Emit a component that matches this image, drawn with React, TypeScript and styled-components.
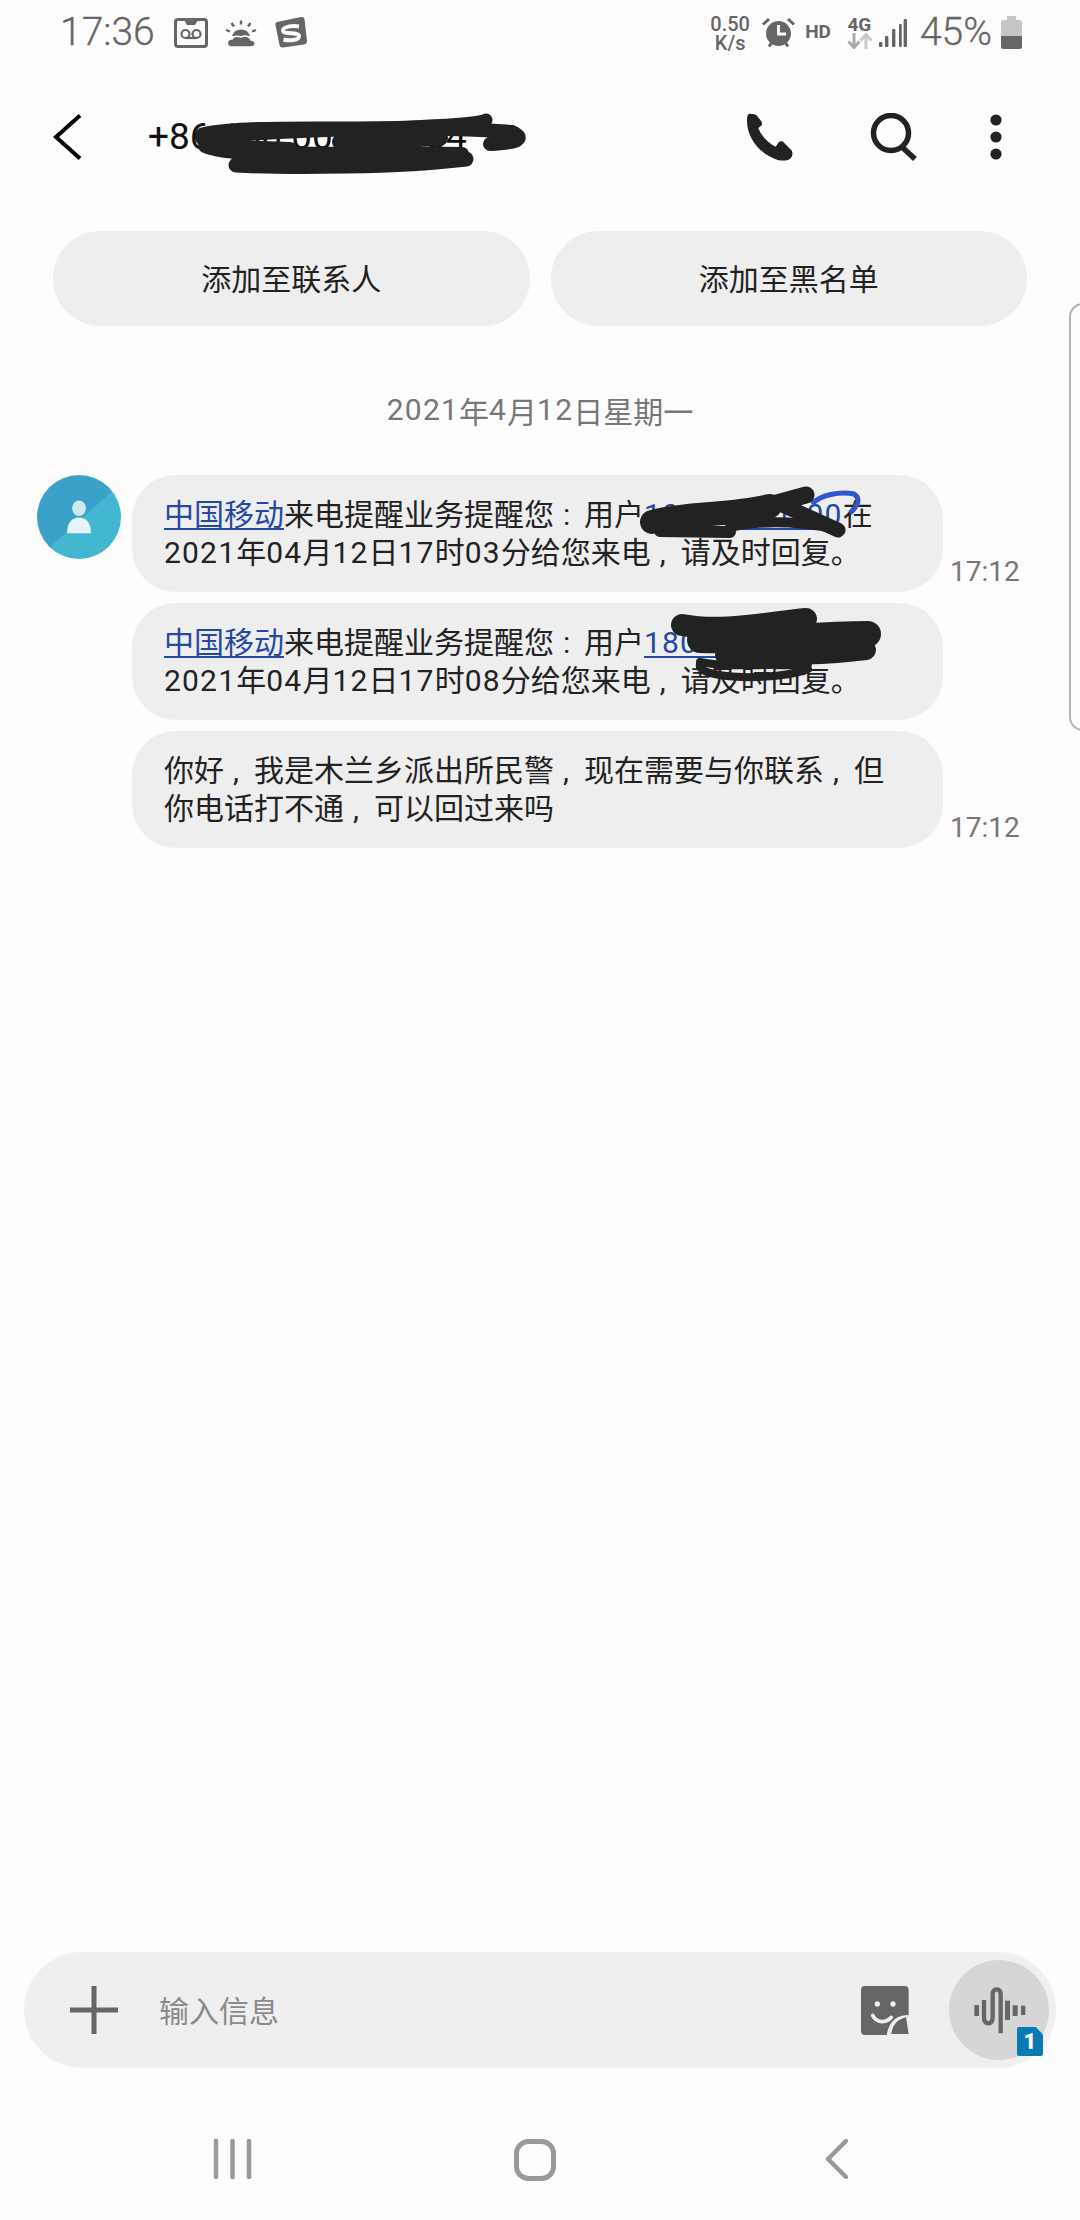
import React from "react";
import styled, { createGlobalStyle } from "styled-components";

const Global = createGlobalStyle`
  html, body { margin: 0; padding: 0; background: #fdfdfd; }
  * { box-sizing: border-box; }
`;

const SANS = `Roboto, "Noto Sans CJK SC", sans-serif`;

const Page = styled.div`
  position: relative;
  width: 1080px;
  height: 2220px;
  display: flex;
  flex-direction: column;
  overflow: hidden;
  background: #fdfdfd;
  font-family: ${SANS};
  color: #222;
`;

const StatusBar = styled.div`
  height: 64px;
  flex: none;
  display: flex;
  align-items: center;
  justify-content: space-between;
  padding: 0 58px 0 60px;
  color: #666;
`;
const StatusGroup = styled.div`
  display: flex;
  align-items: center;
`;
const Clock = styled.span`
  font-size: 39px;
  font-weight: 300;
  line-height: 40px;
  margin-right: 19px;
  -webkit-text-stroke: 0.3px #666;
`;
const StatusIcon = styled.svg<{ $ml?: number; $mt?: number }>`
  display: block;
  flex: none;
  margin-left: ${(p) => p.$ml ?? 0}px;
  margin-top: ${(p) => p.$mt ?? 0}px;
`;
const Speed = styled.div`
  width: 44px;
  text-align: center;
  font-size: 20px;
  font-weight: 500;
  line-height: 19px;
  margin-top: 3px;
`;
const SpeedLine = styled.div`
  height: 19px;
`;
const TinyLabel = styled.span<{ $ml: number }>`
  font-size: 19px;
  font-weight: 700;
  margin-left: ${(p) => p.$ml}px;
  line-height: 20px;
`;
const NetStack = styled.div`
  display: flex;
  flex-direction: column;
  align-items: center;
  width: 27px;
  margin-left: 15px;
  font-size: 19px;
  font-weight: 700;
  line-height: 17px;
`;
const Percent = styled.span`
  font-size: 39px;
  font-weight: 300;
  line-height: 40px;
  margin-left: 13px;
  -webkit-text-stroke: 0.3px #666;
`;

const Header = styled.header`
  position: relative;
  height: 146px;
  flex: none;
  display: flex;
  align-items: center;
  padding: 0 77px 0 53px;
`;
const BackIcon = styled.svg`
  display: block;
  flex: none;
`;
const Title = styled.div`
  font-size: 37px;
  line-height: 44px;
  color: #111;
  margin-left: 66px;
  flex: 1;
`;
const HeaderIcon = styled.svg<{ $mr: number }>`
  display: block;
  flex: none;
  margin-right: ${(p) => p.$mr}px;
`;
const Scribble = styled.svg`
  position: absolute;
  inset: 0;
  width: 100%;
  height: 100%;
  overflow: visible;
  pointer-events: none;
`;

const Actions = styled.div`
  display: flex;
  gap: 21px;
  padding: 0 53px;
  margin-top: 21px;
  flex: none;
`;
const ActionButton = styled.div`
  flex: 1;
  height: 95px;
  padding-bottom: 3px;
  border-radius: 47.5px;
  background: #eeeeee;
  display: flex;
  align-items: center;
  justify-content: center;
  font-size: 30px;
  color: #222;
`;

const DateLine = styled.div`
  height: 100px;
  padding-bottom: 3px;
  margin: 35px 0 14px;
  display: flex;
  align-items: center;
  justify-content: center;
  font-size: 30px;
  color: #777;
  flex: none;
`;

const Thread = styled.main`
  flex: 1;
  display: flex;
  flex-direction: column;
  gap: 11px;
  padding-left: 37px;
`;
const MessageRow = styled.div`
  display: flex;
  align-items: flex-start;
`;
const AvatarSlot = styled.div`
  width: 95px;
  flex: none;
`;
const Avatar = styled.div`
  width: 84px;
  height: 84px;
  border-radius: 50%;
  background: linear-gradient(138deg, #3aa2c8 0%, #3aa2c8 52%, #43b6d0 53%, #43b6d0 100%);
  display: flex;
  align-items: center;
  justify-content: center;
`;
const Bubble = styled.div`
  position: relative;
  width: 811px;
  height: 117px;
  border-radius: 44px;
  background: #eeeeee;
  padding: 21px 0 0 32px;
  font-size: 30px;
  line-height: 38px;
  color: #222;
  white-space: nowrap;
  flex: none;
`;
const TextLink = styled.span`
  color: #2348a5;
  text-decoration: underline;
  text-underline-offset: 3px;
  text-decoration-thickness: 2px;
`;
const Punct = styled.span`
  display: inline-block;
  width: 30px;
  padding-left: 9px;
`;
const Digits = styled.span`
  letter-spacing: 1.2px;
`;
const Time = styled.div`
  align-self: flex-end;
  margin: 0 0 3px 7px;
  font-size: 28px;
  line-height: 34px;
  color: #777;
`;

const Composer = styled.div`
  position: relative;
  height: 116px;
  margin: 0 24px;
  border-radius: 58px;
  background: #efefef;
  display: flex;
  align-items: center;
  padding-left: 46px;
  flex: none;
`;
const PlusIcon = styled.svg`
  display: block;
  flex: none;
`;
const Placeholder = styled.div`
  flex: 1;
  margin-left: 41px;
  padding-bottom: 3px;
  font-size: 30px;
  color: #8a8a8a;
`;
const StickerIcon = styled.svg`
  display: block;
  flex: none;
  margin-right: 39px;
`;
const VoiceButton = styled.div`
  position: relative;
  width: 100px;
  height: 100px;
  border-radius: 50%;
  background: #d6d6d6;
  margin-right: 7px;
  flex: none;
`;
const WaveIcon = styled.svg`
  display: block;
`;
const Badge = styled.div`
  position: absolute;
  left: 68px;
  top: 67px;
  width: 26px;
  height: 29px;
  background: #0a7ab5;
  border-radius: 2px;
  clip-path: polygon(0 0, 72% 0, 100% 26%, 100% 100%, 0 100%);
  color: #fff;
  font-size: 22px;
  font-weight: 900;
  line-height: 30px;
  text-align: center;
`;

const NavBar = styled.nav`
  height: 152px;
  flex: none;
  display: flex;
  align-items: flex-start;
  padding: 71px 0 0 213px;
`;
const NavIcon = styled.svg<{ $ml?: number }>`
  display: block;
  flex: none;
  margin-left: ${(p) => p.$ml ?? 0}px;
`;

const EdgeHandle = styled.div`
  position: absolute;
  left: 1069px;
  top: 303px;
  width: 20px;
  height: 428px;
  border: 2px solid #b4b4b4;
  border-radius: 14px 0 0 14px;
`;

const G = "#666666";
const INK = "#222222";

/* Digits in the reference run a little wider than Roboto's: space only the numerals. */
const Num = ({ children }: { children: string }) => (
  <>
    {children.split(/(\d+)/).map((part, i) =>
      /^\d+$/.test(part) ? <Digits key={i}>{part}</Digits> : <React.Fragment key={i}>{part}</React.Fragment>
    )}
  </>
);

const AvatarPerson = () => (
  <svg width="28" height="35" viewBox="0 0 30 38">
    <ellipse cx="15" cy="9" rx="7.5" ry="8.5" fill="#cfe9f1" />
    <path d="M2 36 C2 24 8 19 15 19 C22 19 28 24 28 36 Z" fill="#e6f4f8" />
  </svg>
);

const BubbleOneInk = () => (
  <Scribble viewBox="132 475 811 117">
    <path d="M812 504 C 820 495, 840 491, 854 494 C 861 498, 858 506, 850 513" fill="none" stroke="#2f55cf" strokeWidth="5" />
    <g fill="none" stroke={INK} strokeLinecap="round">
      <path d="M652 522 C 690 512, 730 516, 770 506" strokeWidth="24" />
      <path d="M766 506 L 806 495" strokeWidth="17" />
      <path d="M660 531 L 730 532" strokeWidth="12" />
      <path d="M780 504 L 838 530" strokeWidth="15" />
      <path d="M730 527 C 760 520, 800 522, 835 528" strokeWidth="10" />
    </g>
  </Scribble>
);

const BubbleTwoInk = () => (
  <Scribble viewBox="132 603 811 117">
    <g fill="none" stroke={INK} strokeLinecap="round">
      <path d="M682 625 C 720 632, 760 624, 806 619" strokeWidth="22" />
      <path d="M700 640 C 760 642, 810 634, 868 634" strokeWidth="26" />
      <path d="M725 655 C 770 655, 820 656, 866 650" strokeWidth="20" />
      <path d="M700 664 C 695 680, 780 681, 808 669 M700 662 C 730 668, 770 664, 808 664" strokeWidth="8" />
    </g>
  </Scribble>
);

const HeaderInk = () => (
  <Scribble viewBox="0 64 1080 146">
    <g fill="none" stroke={INK} strokeLinecap="round">
      <path d="M202 134 C 250 124, 340 130, 410 127 C 450 125, 478 124, 486 120" strokeWidth="13" />
      <path d="M202 138 C 300 128, 430 126, 512 132 C 525 138, 520 143, 490 144" strokeWidth="14" />
      <path d="M205 146 C 235 158, 300 152, 462 154" strokeWidth="14" />
      <path d="M236 165 C 290 168, 400 167, 466 159" strokeWidth="15" />
      <path d="M228 148 L 290 150 M 340 142 L 440 138" strokeWidth="16" />
    </g>
  </Scribble>
);

export default function App() {
  return (
    <Page>
      <Global />
      <StatusBar>
        <StatusGroup>
          <Clock>17:36</Clock>
          <StatusIcon width="34" height="30" viewBox="0 0 34 30" $mt={2}>
            <rect x="1.5" y="1.5" width="31" height="27" rx="2.5" fill="none" stroke={G} strokeWidth="3" />
            <path d="M10 2 H24 L21 7 H13 Z" fill={G} />
            <circle cx="11.5" cy="16" r="4" fill="none" stroke={G} strokeWidth="2.2" />
            <circle cx="22.5" cy="16" r="4" fill="none" stroke={G} strokeWidth="2.2" />
            <path d="M11.5 20 H22.5" stroke={G} strokeWidth="2.2" />
          </StatusIcon>
          <StatusIcon width="32" height="28" viewBox="0 0 32 28" $ml={17} $mt={3}>
            <path d="M16 0.5 V4.5 M6.5 3 L9 6.5 M25.5 3 L23 6.5 M1 10 L5 11.5 M31 10 L27 11.5" stroke={G} strokeWidth="2.4" />
            <path d="M7 16 A9.5 9.5 0 0 1 25 16 Z" fill={G} />
            <path d="M6 27 C1 27 1 19 7 19 C9 15 13 16 16 17 C20 15 25 16 26 20 C31 20 32 27 26 27 Z" fill={G} stroke="#fdfdfd" strokeWidth="1.5" />
          </StatusIcon>
          <StatusIcon width="32" height="32" viewBox="0 0 32 32" $ml={18}>
            <path d="M2 6 L26 1 Q29 0.5 29.5 3 L32 25 Q32 28 29 28.5 L8 31.5 Q5 32 4.5 29 L0.5 9 Q0 6.5 2 6 Z" fill={G} />
            <path d="M24 10.5 C 17 9.5, 8 10.5, 8 14.5 C 8 19, 24 15.5, 24 20 C 24 24.5, 14 25, 8.5 23.5" fill="none" stroke="#fdfdfd" strokeWidth="4" />
          </StatusIcon>
        </StatusGroup>
        <StatusGroup>
          <Speed>
            <SpeedLine>0.50</SpeedLine>
            <SpeedLine>K/s</SpeedLine>
          </Speed>
          <StatusIcon width="33" height="31" viewBox="0 0 33 31" $ml={10}>
            <circle cx="16.5" cy="16.5" r="12.5" fill={G} />
            <path d="M16.5 8 V17 H24" fill="none" stroke="#fdfdfd" strokeWidth="2.8" />
            <path d="M1 7.5 L7 2 M32 7.5 L26 2" stroke={G} strokeWidth="3" />
            <path d="M7 29.5 L9.5 26 M26 29.5 L23.5 26" stroke={G} strokeWidth="3" />
          </StatusIcon>
          <TinyLabel $ml={10}>HD</TinyLabel>
          <NetStack>
            4G
            <svg width="25" height="16" viewBox="0 0 25 16">
              <path d="M7 0 V13 M1.5 8.5 L7 14.5 L12.5 8.5" fill="none" stroke="#a8a8a8" strokeWidth="3" />
              <path d="M19 16 V2 M13.5 7.5 L19 1.5 L24.5 7.5" fill="none" stroke="#c8c8c8" strokeWidth="3" />
            </svg>
          </NetStack>
          <StatusIcon width="28" height="28" viewBox="0 0 28 28" $ml={6} $mt={2}>
            <g fill={G}>
              <rect x="0" y="23" width="3.4" height="5" rx="1" />
              <rect x="6" y="17" width="3.4" height="11" rx="1" />
              <rect x="13" y="10" width="3.4" height="18" rx="1" />
              <rect x="20" y="5" width="2.8" height="23" rx="1" />
              <rect x="24.6" y="0" width="3.4" height="28" rx="1" />
            </g>
          </StatusIcon>
          <Percent>45%</Percent>
          <StatusIcon width="21" height="33" viewBox="0 0 21 33" $ml={9}>
            <path d="M6 0 H15 V4 H18.5 Q21 4 21 6.5 V20 H0 V6.5 Q0 4 2.5 4 H6 Z" fill="#c6c6c6" />
            <path d="M0 20 H21 V30.5 Q21 33 18.5 33 H2.5 Q0 33 0 30.5 Z" fill={G} />
          </StatusIcon>
        </StatusGroup>
      </StatusBar>

      <Header>
        <BackIcon width="29" height="46" viewBox="0 0 29 46">
          <path d="M27 1.5 L3 23 L27 44.5" fill="none" stroke="#000" strokeWidth="4" />
        </BackIcon>
        <Title>+86 100 0000 0004</Title>
        <HeaderIcon width="48" height="48" viewBox="0 0 47 47" $mr={77}>
          <path
            d="M6 1 C3 0 2 2 2 8 C2 24 14 40 32 46 C38 47 42 47 45 44 C47 41 47 38 45 36 L37 28 C35 27 33 28 32 30 L30 33 C22 29 16 22 13 15 L15 13 C17 12 17 10 16 8 L11 2 C9 1 8 1 6 1 Z"
            fill={INK}
          />
        </HeaderIcon>
        <HeaderIcon width="49" height="48" viewBox="0 0 49 48" $mr={70}>
          <circle cx="21" cy="20" r="17.5" fill="none" stroke={INK} strokeWidth="5.5" />
          <path d="M32 34 L45 46" stroke={INK} strokeWidth="5.5" />
        </HeaderIcon>
        <HeaderIcon width="14" height="48" viewBox="0 0 14 48" $mr={0}>
          <circle cx="7" cy="7" r="5.6" fill={INK} />
          <circle cx="7" cy="24" r="5.6" fill={INK} />
          <circle cx="7" cy="41" r="5.6" fill={INK} />
        </HeaderIcon>
        <HeaderInk />
      </Header>

      <Actions>
        <ActionButton>添加至联系人</ActionButton>
        <ActionButton>添加至黑名单</ActionButton>
      </Actions>

      <DateLine>
        <Num>2021年4月12日星期一</Num>
      </DateLine>

      <Thread>
        <MessageRow>
          <AvatarSlot>
            <Avatar>
              <AvatarPerson />
            </Avatar>
          </AvatarSlot>
          <Bubble>
            <TextLink>中国移动</TextLink>来电提醒业务提醒您<Punct>:</Punct>用户
            <TextLink>
              <Num>10000000200</Num>
            </TextLink>
            在
            <br />
            <Num>2021年04月12日17时03分给您来电</Num>
            <Punct>,</Punct>请及时回复。
            <BubbleOneInk />
          </Bubble>
          <Time>17:12</Time>
        </MessageRow>
        <MessageRow>
          <AvatarSlot />
          <Bubble>
            <TextLink>中国移动</TextLink>来电提醒业务提醒您<Punct>:</Punct>用户
            <TextLink>
              <Num>18000000000</Num>
            </TextLink>
            在
            <br />
            <Num>2021年04月12日17时08分给您来电</Num>
            <Punct>,</Punct>请及时回复。
            <BubbleTwoInk />
          </Bubble>
        </MessageRow>
        <MessageRow>
          <AvatarSlot />
          <Bubble>
            你好<Punct>,</Punct>我是木兰乡派出所民警<Punct>,</Punct>现在需要与你联系<Punct>,</Punct>但
            <br />
            你电话打不通<Punct>,</Punct>可以回过来吗
          </Bubble>
          <Time>17:12</Time>
        </MessageRow>
      </Thread>

      <Composer>
        <PlusIcon width="48" height="48" viewBox="0 0 48 48">
          <path d="M24 0 V48 M0 24 H48" stroke={G} strokeWidth="5" />
        </PlusIcon>
        <Placeholder>输入信息</Placeholder>
        <StickerIcon width="50" height="50" viewBox="62 135 150 150">
          <path d="M65 150 Q65 138 77 138 H196 Q208 138 208 150 V225 L150 285 H77 Q65 285 65 273 Z" fill={G} />
          <circle cx="114" cy="192" r="8" fill="#efefef" />
          <circle cx="161" cy="192" r="8" fill="#efefef" />
          <path d="M100 226 C 112 250, 140 250, 156 232" fill="none" stroke="#efefef" strokeWidth="11" strokeLinecap="round" />
          <path d="M208 225 C 175 225, 150 240, 142 285 L150 285 Z" fill="#efefef" />
          <path d="M200 232 C 178 238, 160 250, 156 282 L208 282 Z" fill={G} />
        </StickerIcon>
        <VoiceButton>
          <WaveIcon width="100" height="100" viewBox="327 60 300 300">
            <g fill={G}>
              <rect x="403" y="195" width="14" height="33" />
              <rect x="495" y="182" width="15" height="58" />
              <rect x="518" y="196" width="15" height="32" />
              <rect x="543" y="197" width="13" height="28" />
            </g>
            <path
              d="M432 180 V232 Q432 250 445 250 Q458 250 458 232 V165 Q458 148 470 148 Q482 148 482 165 V280"
              fill="none"
              stroke={G}
              strokeWidth="13"
            />
          </WaveIcon>
          <Badge>1</Badge>
        </VoiceButton>
      </Composer>

      <NavBar>
        <NavIcon width="39" height="40" viewBox="0 0 39 40">
          <path d="M3 2 V38 M19.5 2 V38 M36 2 V38" stroke="#999" strokeWidth="4.5" strokeLinecap="round" />
        </NavIcon>
        <NavIcon width="42" height="42" viewBox="0 0 42 42" $ml={262}>
          <rect x="2.5" y="2.5" width="37" height="37" rx="12" fill="none" stroke="#999" strokeWidth="5" />
        </NavIcon>
        <NavIcon width="23" height="40" viewBox="0 0 23 40" $ml={269}>
          <path d="M21 2 L3 20 L21 38" fill="none" stroke="#999" strokeWidth="4.5" strokeLinecap="round" strokeLinejoin="round" />
        </NavIcon>
      </NavBar>

      <EdgeHandle />
    </Page>
  );
}
